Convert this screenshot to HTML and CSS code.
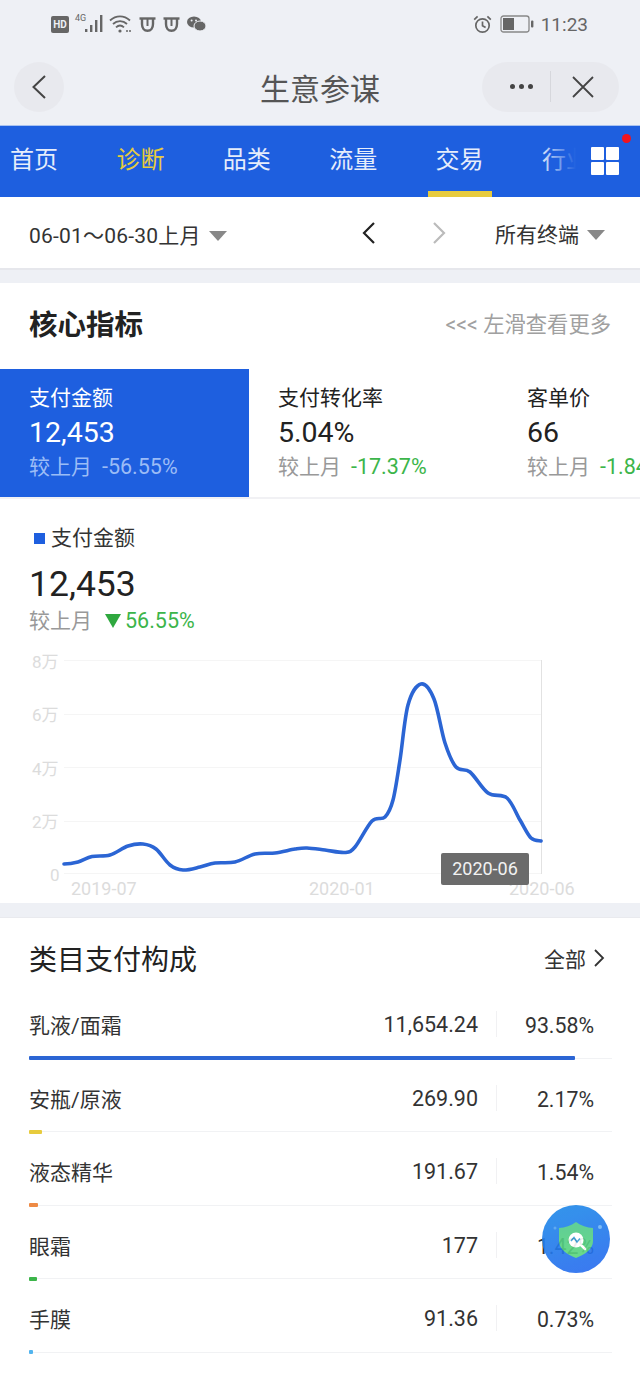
FILE: index.html
```html
<!DOCTYPE html>
<html lang="zh-CN">
<head>
    <meta charset="UTF-8">
    <meta name="viewport" content="width=device-width, initial-scale=1.0">
    <title>生意参谋</title>
    <link rel="stylesheet" href="styles.css">
</head>
<body>
    <div class="phone">
        <!-- Status Bar -->
        <div class="status-bar">
            <div class="status-left">
                <span class="hd-badge">HD</span>
                <span class="net-type">4G</span>
                <svg class="signal" width="20" height="20" viewBox="0 0 20 20" fill="#666">
                    <rect x="0" y="15" width="2.4" height="3"/>
                    <rect x="5" y="11" width="2.4" height="7"/>
                    <rect x="10" y="6" width="2.4" height="12"/>
                    <rect x="15" y="1" width="2.4" height="17"/>
                </svg>
                <svg class="wifi" width="23" height="20" viewBox="0 0 23 20" fill="none" stroke="#666" stroke-width="1.8">
                    <path d="M1 6.5C7 1 15 1 21 6.5"/>
                    <path d="M4 10C8 6.2 14 6.2 18 10"/>
                    <path d="M7 13.3C9.5 11 12.5 11 15 13.3"/>
                    <circle cx="11" cy="17" r="1.6" fill="#666" stroke="none"/>
                    <path d="M17 17h5" stroke-dasharray="2 1" stroke-width="1.4"/>
                </svg>
                <svg class="cow" width="17" height="18" viewBox="0 0 17 18" fill="none" stroke="#666" stroke-width="2.4">
                    <path d="M0.5 3.5H16.5"/>
                    <path d="M3 3.5V9C3 13.2 5.2 15.8 8.5 15.8S14 13.2 14 9V3.5"/>
                    <path d="M8.5 4V11" stroke-width="2"/>
                </svg>
                <svg class="cow" width="17" height="18" viewBox="0 0 17 18" fill="none" stroke="#666" stroke-width="2.4">
                    <path d="M0.5 3.5H16.5"/>
                    <path d="M3 3.5V9C3 13.2 5.2 15.8 8.5 15.8S14 13.2 14 9V3.5"/>
                    <path d="M8.5 4V11" stroke-width="2"/>
                </svg>
                <svg class="wechat" width="19" height="16" viewBox="0 0 19 16" fill="#666">
                    <ellipse cx="7" cy="6" rx="7" ry="5.6"/>
                    <ellipse cx="13" cy="10" rx="6" ry="5" stroke="#eef0f5" stroke-width="1"/>
                    <circle cx="4.6" cy="4.6" r="1" fill="#eef0f5"/>
                    <circle cx="9" cy="4.6" r="1" fill="#eef0f5"/>
                </svg>
            </div>
            <div class="status-right">
                <svg width="19" height="19" viewBox="0 0 19 19" fill="none" stroke="#666" stroke-width="1.7">
                    <circle cx="9.5" cy="10.5" r="6.7"/>
                    <path d="M9.5 6.5V10.8L12.6 12.6"/>
                    <path d="M1.2 4.6L4.6 1.4M17.8 4.6L14.4 1.4"/>
                </svg>
                <svg class="battery" width="34" height="18" viewBox="0 0 34 18">
                    <rect x="1" y="1" width="28" height="16" rx="2.5" fill="none" stroke="#888" stroke-width="1.3"/>
                    <rect x="3" y="3" width="11" height="12" fill="#666"/>
                    <rect x="31" y="5.5" width="2.4" height="7" rx="1" fill="#666"/>
                </svg>
                <span class="clock">11:23</span>
            </div>
        </div>

        <!-- Title Bar -->
        <div class="title-bar">
            <div class="back-button">
                <svg width="16" height="26" viewBox="0 0 16 26" fill="none" stroke="#444" stroke-width="2">
                    <path d="M14 2L2.5 13L14 24"/>
                </svg>
            </div>
            <div class="page-title">生意参谋</div>
            <div class="capsule">
                <div class="capsule-dots"><i></i><i></i><i></i></div>
                <div class="capsule-line"></div>
                <svg class="capsule-close" width="24" height="24" viewBox="0 0 24 24" stroke="#444" stroke-width="1.8">
                    <path d="M2 2L22 22M22 2L2 22"/>
                </svg>
            </div>
        </div>

        <!-- Tabs -->
        <div class="tabs">
            <a class="tab">首页</a>
            <a class="tab tab-hot">诊断</a>
            <a class="tab">品类</a>
            <a class="tab">流量</a>
            <a class="tab tab-current">交易</a>
            <a class="tab">行业</a>
            <div class="tabs-more">
                <div class="grid-icon"><i></i><i></i><i></i><i></i></div>
                <span class="red-dot"></span>
            </div>
        </div>

        <!-- Date Filter -->
        <div class="filter-bar">
            <div class="date-range">06-01～06-30上月<span class="caret"></span></div>
            <div class="date-arrows">
                <svg width="16" height="26" viewBox="0 0 16 26" fill="none" stroke="#222" stroke-width="2.2">
                    <path d="M13 3L3 13L13 23"/>
                </svg>
                <svg width="16" height="26" viewBox="0 0 16 26" fill="none" stroke="#bbb" stroke-width="2.2">
                    <path d="M3 3L13 13L3 23"/>
                </svg>
            </div>
            <div class="terminal">所有终端<span class="caret"></span></div>
        </div>

        <!-- Core Metrics -->
        <div class="section core">
            <div class="core-head">
                <h2>核心指标</h2>
                <span class="swipe-hint">&lt;&lt;&lt; 左滑查看更多</span>
            </div>
            <div class="metrics">
                <div class="metric metric-on">
                    <div class="metric-name">支付金额</div>
                    <div class="metric-value">12,453</div>
                    <div class="metric-diff">较上月<span>-56.55%</span></div>
                </div>
                <div class="metric">
                    <div class="metric-name">支付转化率</div>
                    <div class="metric-value">5.04%</div>
                    <div class="metric-diff">较上月<span>-17.37%</span></div>
                </div>
                <div class="metric">
                    <div class="metric-name">客单价</div>
                    <div class="metric-value">66</div>
                    <div class="metric-diff">较上月<span>-1.84%</span></div>
                </div>
            </div>

            <div class="detail">
                <div class="detail-name"><i></i>支付金额</div>
                <div class="detail-value">12,453</div>
                <div class="detail-diff">较上月<i></i><span>56.55%</span></div>
            </div>

            <div class="chart">
                <svg class="chart-svg" width="640" height="253" viewBox="0 650 640 253">
                    <g stroke="#f5f5f5" stroke-width="1">
                        <path d="M64 660.5H541M64 714.5H541M64 767.5H541M64 821.5H541M64 873.5H541"/>
                    </g>
                    <path d="M541.5 660V874" stroke="#e2e2e2" stroke-width="1"/>
                    <g class="axis-label">
                        <text x="32" y="668">8万</text>
                        <text x="32" y="721">6万</text>
                        <text x="32" y="775">4万</text>
                        <text x="32" y="828">2万</text>
                        <text x="50" y="881">0</text>
                        <text class="axis-x" x="71" y="895">2019-07</text>
                        <text class="axis-x" x="309" y="895">2020-01</text>
                        <text class="axis-x" x="509" y="895">2020-06</text>
                    </g>
                    <path fill="none" stroke="#2b65d4" stroke-width="3.6" stroke-linecap="round"
                        d="M64 864C68 864 73.3 863.25 78 862S86.7 857.7 92 856.5S104 856.75 110 855S122.5 847.8 128 846S138.3 843.5 143 844S151.5 845.5 156 849S165.5 861.5 170 865S178 869.7 183 870S194.7 868.2 200 867S209.2 863.8 215 863S228.3 863.5 235 862S248.3 855.5 255 854S268.3 853.8 275 853S289.7 849.8 295 849S302 847.8 307 848S318.7 849.25 325 850S340 853 345 852.5S350.5 852.25 355 847S367 826 372 821S381.5 820.5 385 817S390.5 809.5 393 800S397.5 775.8 400 760S404.5 717.7 408 705S416.7 685 421 684S430 689.2 434 699S441.3 731.7 445 743S451.8 762.2 456 767S464.7 767.7 470 772S481.8 788.7 488 793S501.7 793.5 507 798S516 813.3 520 820S527.5 834.5 531 838S539.3 840.5 541 841"/>
                </svg>
                <div class="chart-tip">2020-06</div>
            </div>
        </div>

        <!-- Category Breakdown -->
        <div class="section category">
            <div class="category-head">
                <h2>类目支付构成</h2>
                <div class="see-all">全部
                    <svg width="12" height="20" viewBox="0 0 12 20" fill="none" stroke="#333" stroke-width="1.8">
                        <path d="M2 2L10 10L2 18"/>
                    </svg>
                </div>
            </div>
            <div class="cat-row">
                <div class="cat-main">
                    <span class="cat-name">乳液/面霜</span>
                    <span class="cat-amount">11,654.24</span>
                    <span class="cat-percent">93.58%</span>
                </div>
                <div class="cat-track"><div class="cat-bar bar-blue" style="width: 93.58%"></div></div>
            </div>
            <div class="cat-row">
                <div class="cat-main">
                    <span class="cat-name">安瓶/原液</span>
                    <span class="cat-amount">269.90</span>
                    <span class="cat-percent">2.17%</span>
                </div>
                <div class="cat-track"><div class="cat-bar bar-yellow" style="width: 2.17%"></div></div>
            </div>
            <div class="cat-row">
                <div class="cat-main">
                    <span class="cat-name">液态精华</span>
                    <span class="cat-amount">191.67</span>
                    <span class="cat-percent">1.54%</span>
                </div>
                <div class="cat-track"><div class="cat-bar bar-orange" style="width: 1.54%"></div></div>
            </div>
            <div class="cat-row">
                <div class="cat-main">
                    <span class="cat-name">眼霜</span>
                    <span class="cat-amount">177</span>
                    <span class="cat-percent">1.42%</span>
                </div>
                <div class="cat-track"><div class="cat-bar bar-green" style="width: 1.42%"></div></div>
            </div>
            <div class="cat-row">
                <div class="cat-main">
                    <span class="cat-name">手膜</span>
                    <span class="cat-amount">91.36</span>
                    <span class="cat-percent">0.73%</span>
                </div>
                <div class="cat-track"><div class="cat-bar bar-sky" style="width: 0.73%"></div></div>
            </div>
        </div>

        <!-- Floating Button -->
        <div class="float-button">
            <svg width="68" height="68" viewBox="0 0 68 68">
                <defs>
                    <linearGradient id="shieldFill" x1="0" y1="0" x2="0" y2="1">
                        <stop offset="0" stop-color="#4fc98c"/>
                        <stop offset="1" stop-color="#5ad67c"/>
                    </linearGradient>
                </defs>
                <path d="M34 17C39 21 45 22.5 51 23V36C51 44 43 49.5 34 53C25 49.5 17 44 17 36V23C23 22.5 29 21 34 17Z" fill="url(#shieldFill)"/>
                <circle cx="34" cy="35" r="7.5" fill="#fff"/>
                <path d="M39.5 40.5L43 44" stroke="#fff" stroke-width="2.5" stroke-linecap="round"/>
                <path d="M29 36L32 32.5L35 37L38 33.5" fill="none" stroke="#3b9fd6" stroke-width="1.5"/>
                <circle cx="58" cy="22" r="2" fill="#6db4f5"/>
                <circle cx="13" cy="23" r="1.5" fill="#4ea0f0"/>
            </svg>
        </div>
    </div>
</body>
</html>
```

FILE: styles.css
```css
body {
    margin: 0;
    background-color: #eef0f5;
    font-family: Roboto, "Noto Sans CJK SC", sans-serif;
    color: #222;
}

.phone {
    position: relative;
    width: 640px;
    height: 1386px;
    overflow: hidden;
}

h2 {
    margin: 0;
    font-size: 28.5px;
    font-weight: 700;
    color: #222;
}

/* Status Bar */
.status-bar {
    display: flex;
    justify-content: space-between;
    align-items: center;
    height: 48px;
    padding: 0 52px 0 51px;
}

.status-left,
.status-right {
    display: flex;
    align-items: center;
}

.hd-badge {
    width: 18px;
    height: 17px;
    background-color: #666;
    border-radius: 2px;
    color: #eef0f5;
    font-size: 10px;
    font-weight: 700;
    line-height: 17px;
    text-align: center;
}

.net-type {
    width: 10px;
    margin: 0 0 12px 6px;
    font-size: 9px;
    color: #666;
}

.wifi {
    margin-left: 4px;
}

.status-left .cow {
    margin-left: 7px;
}

.wechat {
    margin-left: 7px;
}

.battery {
    margin-left: 8px;
}

.clock {
    margin-left: 7px;
    font-size: 19px;
    color: #666;
}

/* Title Bar */
.title-bar {
    display: grid;
    grid-template-columns: 1fr auto 1fr;
    align-items: center;
    height: 77px;
    padding: 0 21px 0 14px;
}

.back-button {
    display: flex;
    justify-content: center;
    align-items: center;
    width: 50px;
    height: 50px;
    border-radius: 50%;
    background-color: #e8e9ee;
}

.page-title {
    margin-right: -7px;
    font-size: 30px;
    color: #555;
}

.capsule {
    display: flex;
    align-items: center;
    justify-self: end;
    width: 137px;
    height: 50px;
    border-radius: 25px;
    background-color: #e8e9ee;
}

.capsule-dots {
    display: flex;
    gap: 4px;
    width: 68px;
    justify-content: flex-end;
    padding-right: 17px;
    box-sizing: border-box;
}

.capsule-dots i {
    width: 5px;
    height: 5px;
    border-radius: 50%;
    background-color: #444;
}

.capsule-line {
    width: 1px;
    height: 31px;
    background-color: #d6d7dc;
}

.capsule-close {
    margin-left: 20px;
}

/* Tabs */
.tabs {
    position: relative;
    display: flex;
    height: 71px;
    padding-left: 10px;
    background-color: #1e5fdf;
    border-top: 1px solid #a9c2f0;
    overflow: hidden;
}

.tab {
    flex: 0 0 106.4px;
    font-size: 24px;
    line-height: 68px;
    color: #e6edfb;
}

.tab-hot {
    color: #e7cb3d;
}

.tab-current {
    position: relative;
}

.tab-current::after {
    content: "";
    position: absolute;
    left: -8px;
    bottom: 0;
    width: 64px;
    height: 6px;
    background-color: #e7cb3d;
}

.tabs-more {
    position: absolute;
    top: 0;
    right: 0;
    bottom: 0;
    width: 100px;
    background: linear-gradient(to right, rgba(30, 95, 223, 0), #1e5fdf 36%);
}

.grid-icon {
    position: absolute;
    top: 21px;
    left: 51px;
    display: grid;
    grid-template-columns: 13px 13px;
    gap: 2px;
}

.grid-icon i {
    height: 13px;
    background-color: #fff;
    border-radius: 1px;
}

.red-dot {
    position: absolute;
    top: 8px;
    left: 82px;
    width: 9px;
    height: 9px;
    border-radius: 50%;
    background-color: #f0141e;
}

/* Date Filter */
.filter-bar {
    display: flex;
    align-items: center;
    height: 71px;
    padding: 0 35px 0 29px;
    background-color: #fff;
    border-bottom: 2px solid #e6e7ec;
    font-size: 21px;
    color: #333;
}

.date-range {
    width: 332px;
    padding-top: 3px;
    letter-spacing: 0.2px;
}

.date-arrows {
    display: flex;
    gap: 54px;
}

.terminal {
    margin-left: auto;
}

.caret {
    display: inline-block;
    margin-left: 8px;
    border-left: 9px solid transparent;
    border-right: 9px solid transparent;
    border-top: 10px solid #888;
    vertical-align: 2px;
}

/* Core Metrics */
.section {
    background-color: #fff;
}

.core {
    margin-top: 13px;
}

.core-head {
    display: flex;
    justify-content: space-between;
    align-items: center;
    height: 78px;
    padding: 0 29px 8px;
}

.swipe-hint {
    font-size: 21.3px;
    color: #a0a0a0;
}

.metrics {
    display: flex;
    height: 128px;
    border-bottom: 2px solid #f1f1f4;
    overflow: hidden;
}

.metric {
    flex: 0 0 220px;
    padding: 14px 0 0 29px;
}

.metric-on {
    background-color: #1e5fdf;
    color: #fff;
}

.metric-name {
    font-size: 21px;
    line-height: 30px;
}

.metric-value {
    margin-top: 2px;
    font-size: 28.5px;
    line-height: 36px;
}

.metric-diff {
    margin-top: 1px;
    font-size: 21px;
    line-height: 30px;
    color: #999;
}

.metric-diff span {
    margin-left: 10px;
    font-size: 21.5px;
    color: #3cb54a;
}

.metric-on .metric-diff,
.metric-on .metric-diff span {
    color: #9bbcf6;
}

.detail {
    padding: 24px 0 0 29px;
}

.detail-name {
    display: flex;
    align-items: center;
    font-size: 21px;
    line-height: 30px;
    color: #333;
}

.detail-name i {
    width: 11px;
    height: 11px;
    margin: 0 6px 0 5px;
    background-color: #1e5fdf;
}

.detail-value {
    margin-top: 10px;
    font-size: 35.5px;
    line-height: 42px;
}

.detail-diff {
    display: flex;
    align-items: center;
    margin-top: 1px;
    font-size: 21px;
    line-height: 30px;
    color: #999;
}

.detail-diff i {
    margin: 0 4px 0 13px;
    border-left: 8.5px solid transparent;
    border-right: 8.5px solid transparent;
    border-top: 14px solid #2fa83f;
}

.detail-diff span {
    font-size: 21.5px;
    color: #3cb54a;
}

/* Chart */
.chart {
    position: relative;
    height: 253px;
    margin-top: 14px;
}

.chart-svg {
    display: block;
}

.axis-label text {
    font-size: 17px;
    fill: #dcdcdc;
}

.axis-label .axis-x {
    font-size: 18px;
}

.chart-tip {
    position: absolute;
    top: 203px;
    left: 441px;
    width: 88px;
    height: 32px;
    border-radius: 2px;
    background-color: #6b6b6b;
    color: #f2f2f2;
    font-size: 18px;
    line-height: 32px;
    text-align: center;
}

/* Category Breakdown */
.category {
    height: 469px;
    margin-top: 14px;
    padding: 0 28px 0 29px;
    border-top: 1px solid #e9eaee;
}

.category h2 {
    font-size: 28px;
    font-weight: 400;
}

.category-head {
    display: flex;
    justify-content: space-between;
    align-items: center;
    height: 64px;
    padding: 8px 7px 0 0;
}

.see-all {
    display: flex;
    align-items: center;
    gap: 7px;
    font-size: 21px;
    color: #333;
}

.cat-row {
    height: 73.5px;
    padding-top: 19px;
    box-sizing: border-box;
}

.cat-main {
    display: flex;
    align-items: center;
    height: 30px;
    font-size: 21px;
    color: #333;
}

.cat-name {
    flex: 1;
}

.cat-amount {
    padding: 1px 18px 0 0;
    font-size: 21.5px;
}

.cat-percent {
    width: 116px;
    height: 26px;
    padding-right: 18px;
    box-sizing: border-box;
    border-left: 1px solid #f1f1f3;
    font-size: 21.3px;
    line-height: 30px;
    text-align: right;
}

.cat-track {
    height: 4px;
    margin-top: 17px;
    background: linear-gradient(#f1f2f4, #f1f2f4) center / 100% 1px no-repeat;
}

.cat-bar {
    height: 4px;
    border-radius: 1px;
}

.bar-blue {
    background-color: #2b65d4;
}

.bar-yellow {
    background-color: #e7cb3d;
}

.bar-orange {
    background-color: #ee8a45;
}

.bar-green {
    background-color: #3cb54a;
}

.bar-sky {
    background-color: #52b4ee;
}

/* Floating Button */
.float-button {
    position: absolute;
    top: 1205px;
    left: 542px;
    width: 68px;
    height: 68px;
    border-radius: 50%;
    background: linear-gradient(160deg, #1e8ce8, #2668f0);
    opacity: 0.9;
}

.float-button svg {
    display: block;
}
```
